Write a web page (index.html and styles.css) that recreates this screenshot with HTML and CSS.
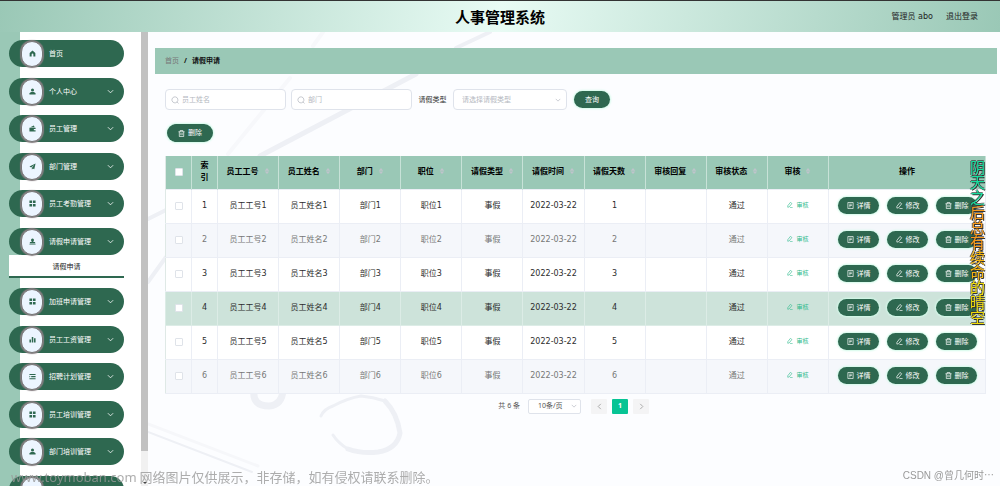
FILE: index.html
```html
<!DOCTYPE html>
<html lang="zh-CN">
<head>
<meta charset="utf-8">
<title>人事管理系统</title>
<link rel="stylesheet" href="styles.css">
</head>
<body>
<svg class="defs" aria-hidden="true">
  <symbol id="home" viewBox="0 0 16 16"><path d="M8 1 14.500 7v8H10v-5a2 2 0 0 0-4 0v5H1.500V7z"/></symbol>
  <symbol id="user" viewBox="0 0 16 16"><circle cx="8" cy="4.500" r="3.500"/><path d="M1 15v-2.500C1 10.500 4 9 8 9s7 1.500 7 3.500V15z"/></symbol>
  <symbol id="wallet" viewBox="0 0 16 16"><path d="M1 6h14v3h-4v3h4v3H1zM3 5l8-4 2 4z"/></symbol>
  <symbol id="plane" viewBox="0 0 16 16"><path d="M15 1 1 8l4 2.500L12 4l-5.500 7.500V15l2.500-2.500 3 1.500z"/></symbol>
  <symbol id="grid" viewBox="0 0 16 16"><path d="M1 1h6v6H1zM9 1h6v6H9zM1 9h6v6H1zM9 9h6v6H9z"/></symbol>
  <symbol id="stamp" viewBox="0 0 16 16"><path d="M8 1a3.500 3.500 0 0 1 3 5L9.500 9H14v3H2V9h4.500L5 6a3.500 3.500 0 0 1 3-5zM1 13h14v2H1z"/></symbol>
  <symbol id="chart" viewBox="0 0 16 16"><path d="M1 8h3.500v7H1zM6.300 2h3.500v13H6.300zM11.500 5H15v10h-3.500z"/></symbol>
  <symbol id="list" viewBox="0 0 16 16"><path d="M1 2h14v2.500H1zM5 7h10v2.500H5zM1 12h14v2.500H1zM1 6l2.500 2L1 10z"/></symbol>
  <symbol id="down" viewBox="0 0 16 16"><path d="m2 5 6 6 6-6" fill="none" stroke="currentColor" stroke-width="1.800"/></symbol>
  <symbol id="search" viewBox="0 0 16 16"><path d="M12 12a6 6 0 1 1 .1-.1L15 15" fill="none" stroke="currentColor" stroke-width="1.500"/></symbol>
  <symbol id="trash" viewBox="0 0 16 16"><path d="M1 4h14M5 4V1h6v3M3 4v11h10V4M6.500 7v5M9.500 7v5" fill="none" stroke="currentColor" stroke-width="1.600"/></symbol>
  <symbol id="doc" viewBox="0 0 16 16"><path d="M2 1h12v14H2zM5 5h6M5 8h6M5 11h3" fill="none" stroke="currentColor" stroke-width="1.600"/></symbol>
  <symbol id="edit" viewBox="0 0 16 16"><path d="M9 1 13 4 6 13 2 14V10zM8 15h7" fill="none" stroke="currentColor" stroke-width="1.600"/></symbol>
  <symbol id="sort" viewBox="0 0 16 16"><path d="m8 0 6 7H2zM8 16l6-7H2z"/></symbol>
</svg>
<header class="topbar">
  <h1 class="title">人事管理系统</h1>
  <div class="account"><span>管理员 abo</span><a href="#">退出登录</a></div>
</header>
<div class="layout">
  <nav class="sidebar" aria-label="菜单"><ul class="menu" id="menu"></ul></nav>
  <div class="scrollbar" aria-hidden="true"><div class="thumb"></div><div class="track"><i></i></div></div>
  <main class="main">
    <svg class="scene" viewBox="0 0 852 454" preserveAspectRatio="xMinYMin slice" aria-hidden="true">
      <g fill="none" stroke="#eef0f5" stroke-linecap="round">
        <path d="M112 124 268 42" stroke-width="5"/><path d="M308 16 342 0" stroke-width="4"/>
        <path d="M80 122 142 46M165 14 175 0" stroke="#f7f8fb" stroke-width="4"/>
        <path d="M0 187 18 178M0 250 18 225" stroke-width="4"/>
        <path d="M0 400 104 440" stroke-width="2"/><path d="M0 392 110 434" stroke="#f6f7fa" stroke-width="3"/>
        <path d="M106 358q-2 16 15 16 13-1 14-16" stroke-width="7"/>
        <path d="M173 384q3-7 12-10 15-8 28-10 12 1 24 5" stroke-width="3"/>
        <path d="M237 369q12 12 15 32-3 16-22 19-16 2-30-3" stroke-width="5"/>
        <path d="M200 417q-10-6-15-14" stroke-width="3"/>
      </g>
    </svg>
    <div class="crumbs"><a href="#">首页</a><b>/</b><strong>请假申请</strong></div>
    <form class="filters">
      <label class="field"><svg><use href="#search"/></svg><input type="text" placeholder="员工姓名" aria-label="员工姓名"></label>
      <label class="field"><svg><use href="#search"/></svg><input type="text" placeholder="部门" aria-label="部门"></label>
      <label class="caption" for="type">请假类型</label>
      <div class="picker"><select id="type"><option>请选择请假类型</option></select><svg><use href="#down"/></svg></div>
      <button class="pill query" type="button">查询</button>
    </form>
    <div class="tools"><button class="pill remove" type="button"><svg><use href="#trash"/></svg>删除</button></div>
    <table class="grid">
      <colgroup><col class="c-small"><col class="c-small"><col span="10"><col class="c-actions"></colgroup>
      <thead><tr id="head"></tr></thead>
      <tbody id="rows"></tbody>
    </table>
    <div class="pager">
      <span>共 6 条</span>
      <div class="picker size"><select aria-label="每页条数"><option>10条/页</option></select><svg><use href="#down"/></svg></div>
      <div class="pages">
        <button type="button" aria-label="上一页"><svg class="prev"><use href="#down"/></svg></button>
        <button type="button" class="current">1</button>
        <button type="button" aria-label="下一页"><svg class="next"><use href="#down"/></svg></button>
      </div>
    </div>
  </main>
</div>
<div class="lyric"><span class="l-green">阴天之</span><span class="l-orange">后总有</span><span class="l-amber">续命</span><span class="l-yellow">的晴空</span></div>
<div class="mark"><span class="site">www.toymoban.com</span> 网络图片仅供展示，非存储，如有侵权请联系删除。</div>
<div class="credit">CSDN @曾几何时⋯</div>
<script src="app.js"></script>
</body>
</html>
```
FILE: styles.css
```css
* { box-sizing: border-box; }
body {
  margin: 0; height: 100vh; overflow: hidden; display: flex; flex-direction: column;
  font: 7px/12px "Noto Sans", "Noto Sans CJK SC", sans-serif; color: #333; background: #fcfdff;
}
a { color: inherit; text-decoration: none; }
button, input, select { font: inherit; color: inherit; margin: 0; }
svg { width: 8px; height: 8px; fill: currentColor; flex: none; }
.defs { position: absolute; width: 0; height: 0; }

.topbar {
  flex: none; height: 32px; border-top: 1px solid #333; position: relative;
  display: flex; align-items: center; justify-content: center;
  background: linear-gradient(100deg, #9ac8b6, #e8fbf4 50%, #9ac8b6);
}
.title { margin: 0; font-size: 15px; line-height: 20px; color: #000; }
.account { position: absolute; right: 22px; display: flex; gap: 13px; font: 8px/12px "DejaVu Sans", "Noto Sans CJK SC", sans-serif; color: #222; }

.layout { flex: 1; min-height: 0; display: flex; }
.sidebar { width: 141px; overflow: hidden; padding: 8px 17px 0 9px; background: linear-gradient(90deg, #9ac8b6 20px, #fff 20px); }
.menu { list-style: none; margin: 0; padding: 0; }
.menu li { margin-bottom: 11px; }
.menu li:nth-child(even) { margin-bottom: 10px; }
.entry {
  width: 100%; height: 27px; padding: 0 10px 0 12px; border: 0; border-radius: 14px;
  background: #2e6850; color: #fff; display: flex; align-items: center; gap: 6px; text-align: left;
}
.badge {
  width: 22px; height: 26px; border: 1px solid #777; border-radius: 11px; background: #ecf5ff; color: #2e6850;
  box-shadow: 0 0 1px 1px #857d80; display: grid; place-items: center;
}
.badge svg { width: 7px; height: 7px; }
.entry > span:nth-child(2) { flex: 1; }
.entry > svg { width: 7px; height: 7px; }
.sub { display: block; height: 23px; line-height: 23px; text-align: center; background: #fff; border-bottom: 2px solid #2e6850; color: #222; }
.scrollbar { width: 7px; display: flex; flex-direction: column; }
.thumb { flex: 12; background: #c1c1c1; }
.track { flex: 1; background: #f1f1f1; display: flex; align-items: end; justify-content: center; }
.track i { border: 2px solid transparent; border-top-color: #444; }

.main { flex: 1; min-width: 0; position: relative; padding: 16px 3px 0 7px; }
.main > :not(.scene) { position: relative; }
.main > .scene { position: absolute; inset: 0; width: 100%; height: 100%; }
.crumbs { height: 26px; padding: 0 10px; display: flex; align-items: center; gap: 5px; background: #9ac8b6; color: #111; }
.crumbs a { color: #777; }

.filters { margin: 15px 10px 0; display: flex; align-items: center; gap: 5px; }
.field, .picker { height: 21px; border: 1px solid #dfe3eb; border-radius: 4px; background: #fff; display: flex; align-items: center; color: #b4b8c0; }
.field { width: 121px; padding: 0 5px; gap: 3px; }
.field input { flex: 1; min-width: 0; border: 0; padding: 0; background: none; }
::placeholder { color: #b4b8c0; }
.picker { width: 114px; padding: 0 5px 0 8px; }
.picker select { flex: 1; min-width: 0; border: 0; padding: 0; appearance: none; background: none; }
.picker svg { width: 6px; height: 6px; }
.caption { width: 31px; text-align: center; white-space: nowrap; }
.pill {
  height: 17px; border: 0; border-radius: 9px; padding: 0 8px; background: #2e6850; color: #fff;
  display: inline-flex; align-items: center; justify-content: center; gap: 3px; box-shadow: 0 0 2px 1px #d3fbea;
}
.pill svg { width: 7px; height: 7px; }
.query { width: 36px; margin-left: 2px; }
.tools { margin: 14px 12px 0; display: flex; }
.remove { width: 46px; height: 18px; }

.grid {
  margin: 14px 10px 0; width: calc(100% - 21px); table-layout: fixed; border-collapse: collapse;
  font: 8px/12px "DejaVu Sans", "Noto Sans CJK SC", sans-serif; color: #2c2c2c;
}
.c-small { width: 26px; }
.c-actions { width: 157px; }
.grid th, .grid td { padding: 0; text-align: center; border: 1px solid #ebeef5; }
.grid th { height: 33px; background: #9ac8b6; color: #000; border-color: #c8e2d8; border-width: 0 1px; }
.grid th svg { width: 6px; height: 8px; color: #c0c4cc; margin-left: 5px; vertical-align: -1px; }
.grid tr > :first-child { border-left-color: #dfe9e6; }
.grid td { height: 34px; background: #fff; }
.grid .stripe td { background: #f5f7fb; color: #777; }
.grid .hover td { background: #cde3da; border-color: #dcece6; }
.grid input { appearance: none; display: inline-block; width: 8px; height: 8px; margin: 0; border: 1px solid #dfe3e9; border-radius: 1px; background: #fff; vertical-align: middle; }
.check { border: 0; padding: 0; background: none; color: #2cba8c; font: 6px/10px "Noto Sans CJK SC", sans-serif; display: inline-flex; align-items: center; gap: 3px; }
.check svg { width: 6px; height: 6px; }
.actions { display: flex; gap: 8px; padding: 0 0 2px 9px; font: 7px/12px "Noto Sans CJK SC", sans-serif; }
.actions .pill { width: 41px; padding: 0; }

.pager { margin-top: 5px; padding-right: 348px; display: flex; align-items: center; justify-content: flex-end; gap: 8px; color: #555; }
.size { width: 53px; height: 15px; border-radius: 2px; padding-left: 9px; padding-right: 3px; }
.size select { color: #555; }
.pages { display: flex; gap: 5px; margin-left: 2px; }
.pages button { width: 16px; height: 15px; border: 0; border-radius: 1px; padding: 0; background: #f4f4f5; color: #999; display: grid; place-items: center; }
.pages .current { background: #06c494; color: #fff; font-weight: bold; }
.pages svg { width: 7px; height: 7px; }
.prev { transform: rotate(90deg); }
.next { transform: rotate(-90deg); }

.lyric {
  position: fixed; top: 160px; right: 14px; writing-mode: vertical-rl;
  font: 15px/17px "Noto Sans CJK SC", sans-serif;
  text-shadow: 1px 1px #333, -1px 0 #333a, 0 -1px #333a;
}
.l-green { color: #18e0a0; }
.l-orange { color: #f79a1c; }
.l-amber { color: #f5b50f; }
.l-yellow { color: #f2dd08; }
.mark { position: fixed; left: 11px; bottom: 0; font: 13px/18px "Noto Sans CJK SC", sans-serif; color: #999c; white-space: nowrap; }
.site { font-family: "Noto Sans", sans-serif; }
.credit { position: fixed; right: 6px; bottom: 3px; font: 10px/14px "Liberation Sans", "Noto Sans CJK SC", sans-serif; color: #999; }
```
FILE: app.js
```js
const icon = (name) => `<svg aria-hidden="true"><use href="#${name}"/></svg>`;

const menu = [
  ["home", "首页"], ["user", "个人中心"], ["wallet", "员工管理"], ["plane", "部门管理"],
  ["grid", "员工考勤管理"], ["stamp", "请假申请管理", "请假申请"], ["grid", "加班申请管理"],
  ["chart", "员工工资管理"], ["list", "招聘计划管理"], ["grid", "员工培训管理"],
  ["user", "部门培训管理"], ["grid", ""],
];
document.getElementById("menu").innerHTML = menu.map(([glyph, label, sub], i) => `
  <li><button type="button" class="entry"><span class="badge">${icon(glyph)}</span><span>${label}</span>${i ? icon("down") : ""}</button>
  ${sub ? `<a class="sub" href="#">${sub}</a>` : ""}</li>`).join("");

const columns = ["员工工号", "员工姓名", "部门", "职位", "请假类型", "请假时间", "请假天数", "审核回复", "审核状态", "审核"];
document.getElementById("head").innerHTML =
  `<th><input type="checkbox" aria-label="全选"></th><th>索<br>引</th>` +
  columns.map((c) => `<th>${c}${icon("sort")}</th>`).join("") + `<th>操作</th>`;

const rows = [1, 2, 3, 4, 5, 6];
document.getElementById("rows").innerHTML = rows.map((n) => {
  const cells = [n, `员工工号${n}`, `员工姓名${n}`, `部门${n}`, `职位${n}`, "事假", "2022-03-22", n, "", "通过"];
  const kind = n === 4 ? "hover" : n % 2 === 0 ? "stripe" : "";
  return `<tr class="${kind}"><td><input type="checkbox" aria-label="选择第${n}行"></td>` +
    cells.map((c) => `<td>${c}</td>`).join("") +
    `<td><button type="button" class="check">${icon("edit")}审核</button></td>
    <td><div class="actions"><button type="button" class="pill">${icon("doc")}详情</button><button type="button" class="pill">${icon("edit")}修改</button><button type="button" class="pill">${icon("trash")}删除</button></div></td></tr>`;
}).join("");
```
